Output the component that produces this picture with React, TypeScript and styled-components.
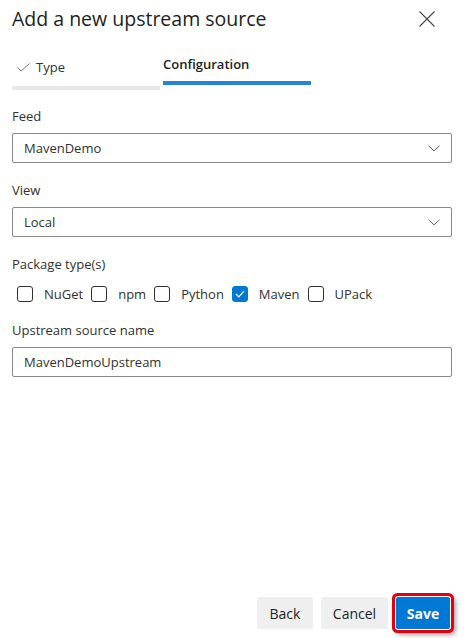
import styled, { createGlobalStyle } from "styled-components"

const GlobalStyle = createGlobalStyle`
	html, body {
		margin: 0;
		padding: 0;
		background: #ffffff;
	}
	* {
		box-sizing: border-box;
	}
`

const Panel = styled.div`
	width: 468px;
	height: 638px;
	display: flex;
	flex-direction: column;
	padding: 0 17px 9px 12px;
	font-family: "Open Sans", "Noto Sans", sans-serif;
	font-size: 13px;
	color: #323130;
	background: #ffffff;
`
const Header = styled.div`
	display: flex;
	align-items: center;
	justify-content: space-between;
	height: 38px;
`
const Title = styled.h1`
	margin: 0;
	font-size: 19.5px;
	font-weight: 400;
	line-height: 28px;
	color: #201f1e;
`
const CloseButton = styled.button`
	width: 24px;
	height: 24px;
	border: none;
	background: transparent;
	padding: 0;
	margin-right: 12px;
	display: flex;
	align-items: center;
	justify-content: center;
	cursor: pointer;
`
const Steps = styled.div`
	display: flex;
	gap: 3px;
	margin-top: 16px;
	align-items: flex-start;
`
const Step = styled.div<{ $active?: boolean }>`
	width: 148px;
	display: flex;
	flex-direction: column;
	padding-top: ${(p) => (p.$active ? "0" : "3px")};
`
const StepLabel = styled.div<{ $active?: boolean }>`
	display: flex;
	align-items: center;
	gap: 6px;
	height: 20px;
	line-height: 20px;
	padding-left: ${(p) => (p.$active ? "0" : "5px")};
	font-weight: ${(p) => (p.$active ? 600 : 400)};
	color: ${(p) => (p.$active ? "#201f1e" : "#323130")};
`
const StepBar = styled.div<{ $active?: boolean }>`
	height: 4px;
	margin-top: ${(p) => (p.$active ? "7px" : "9px")};
	background: ${(p) => (p.$active ? "#2584d8" : "#e8e8e8")};
`
const Form = styled.div`
	display: flex;
	flex-direction: column;
	margin-top: 16px;
`
const Field = styled.div`
	display: flex;
	flex-direction: column;
	margin-bottom: 17px;
`
const Label = styled.label`
	line-height: 20px;
	margin-bottom: 7px;
	color: #323130;
`
const Dropdown = styled.div`
	height: 30px;
	width: 440px;
	border: 1px solid #8a8886;
	border-radius: 2px;
	display: flex;
	align-items: center;
	justify-content: space-between;
	padding: 0 11px;
	color: #323130;
`
const TextBox = styled.div`
	height: 30px;
	width: 440px;
	border: 1px solid #8a8886;
	border-radius: 2px;
	display: flex;
	align-items: center;
	padding: 0 11px;
	color: #323130;
`
const CheckRow = styled.div`
	display: flex;
	align-items: center;
	padding-left: 5px;
	margin-top: 4px;
	height: 18px;
`
const CheckItem = styled.label`
	display: flex;
	align-items: center;
	gap: 11px;
	margin-right: 8px;
	line-height: 20px;
`
const Box = styled.span<{ $checked?: boolean }>`
	width: 16px;
	height: 16px;
	border-radius: 3px;
	border: 1px solid ${(p) => (p.$checked ? "#0078d4" : "#323130")};
	background: ${(p) => (p.$checked ? "#0078d4" : "#ffffff")};
	display: flex;
	align-items: center;
	justify-content: center;
`
const Footer = styled.div`
	margin-top: auto;
	display: flex;
	justify-content: flex-end;
	gap: 8px;
	padding-right: 1px;
`
const Button = styled.button<{ $primary?: boolean; $width: number }>`
	height: 32px;
	width: ${(p) => p.$width}px;
	padding: 0;
	border: none;
	border-radius: 2px;
	font-family: inherit;
	font-size: 14px;
	font-weight: ${(p) => (p.$primary ? 700 : 400)};
	color: ${(p) => (p.$primary ? "#ffffff" : "#201f1e")};
	background: ${(p) => (p.$primary ? "#0078d4" : "#efefef")};
	box-shadow: ${(p) =>
		p.$primary
			? "0 0 0 1px #ffffff, 0 0 0 4px #e3000f, 3px 3px 4px 3px rgba(0,0,0,0.35)"
			: "none"};
	cursor: pointer;
`

const Chevron = () => (
	<svg width="12" height="7" viewBox="0 0 12 7">
		<path d="M0.5 0.8 L6 5.8 L11.5 0.8" fill="none" stroke="#605e5c" strokeWidth="1" />
	</svg>
)

const packages = [
	{ name: "NuGet", checked: false },
	{ name: "npm", checked: false },
	{ name: "Python", checked: false },
	{ name: "Maven", checked: true },
	{ name: "UPack", checked: false }
]

function App() {
	return (
		<>
			<GlobalStyle />
			<Panel>
				<Header>
					<Title>Add a new upstream source</Title>
					<CloseButton aria-label="Close">
						<svg width="16" height="16" viewBox="0 0 16 16">
							<path d="M0.5 0.5 L15.5 15.5 M15.5 0.5 L0.5 15.5" stroke="#444" strokeWidth="1.1" />
						</svg>
					</CloseButton>
				</Header>
				<Steps>
					<Step>
						<StepLabel>
							<svg width="13" height="9" viewBox="0 0 13 9">
								<path d="M0.5 4.5 L4 8 L12.5 0.5" fill="none" stroke="#777" strokeWidth="1" />
							</svg>
							Type
						</StepLabel>
						<StepBar />
					</Step>
					<Step $active>
						<StepLabel $active>Configuration</StepLabel>
						<StepBar $active />
					</Step>
				</Steps>
				<Form>
					<Field>
						<Label>Feed</Label>
						<Dropdown>
							MavenDemo
							<Chevron />
						</Dropdown>
					</Field>
					<Field>
						<Label>View</Label>
						<Dropdown>
							Local
							<Chevron />
						</Dropdown>
					</Field>
					<Field>
						<Label>Package type(s)</Label>
						<CheckRow>
							{packages.map((pkg) => (
								<CheckItem key={pkg.name}>
									<Box $checked={pkg.checked}>
										{pkg.checked && (
											<svg width="10" height="8" viewBox="0 0 10 8">
												<path d="M1 4 L3.8 6.8 L9 1.2" fill="none" stroke="#fff" strokeWidth="1.2" />
											</svg>
										)}
									</Box>
									{pkg.name}
								</CheckItem>
							))}
						</CheckRow>
					</Field>
					<Field>
						<Label>Upstream source name</Label>
						<TextBox>MavenDemoUpstream</TextBox>
					</Field>
				</Form>
				<Footer>
					<Button $width={56}>Back</Button>
					<Button $width={67}>Cancel</Button>
					<Button $primary $width={54}>
						Save
					</Button>
				</Footer>
			</Panel>
		</>
	)
}

export default App
